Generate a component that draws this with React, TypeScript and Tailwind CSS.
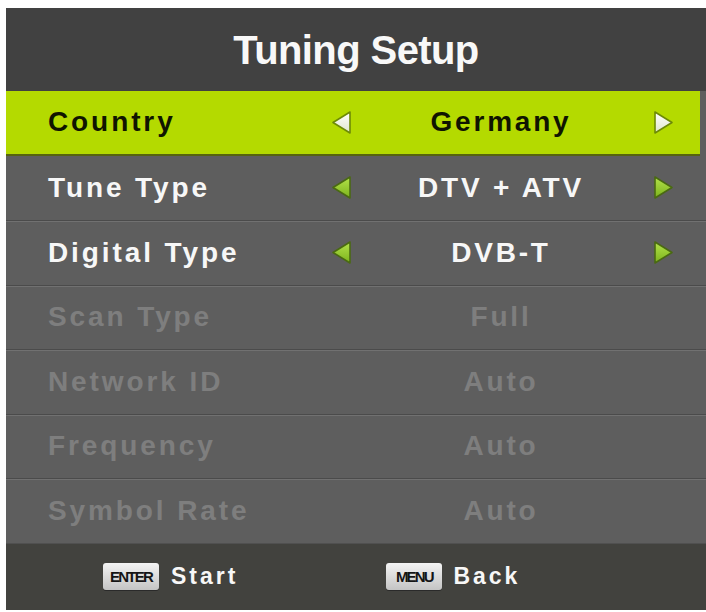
import React from 'react';

type Row = { label: string; value: string; state: 'selected' | 'active' | 'disabled' };

const rows: Row[] = [
  { label: 'Country', value: 'Germany', state: 'selected' },
  { label: 'Tune Type', value: 'DTV + ATV', state: 'active' },
  { label: 'Digital Type', value: 'DVB-T', state: 'active' },
  { label: 'Scan Type', value: 'Full', state: 'disabled' },
  { label: 'Network ID', value: 'Auto', state: 'disabled' },
  { label: 'Frequency', value: 'Auto', state: 'disabled' },
  { label: 'Symbol Rate', value: 'Auto', state: 'disabled' },
];

const Arrow: React.FC<{ dir: 'left' | 'right'; selected: boolean }> = ({ dir, selected }) => {
  const id = `${dir}-${selected ? 's' : 'n'}`;
  const top = selected ? '#ffffff' : '#b3e24a';
  const bottom = selected ? '#dfe6cc' : '#7cb31c';
  const stroke = selected ? '#6d8a06' : '#4a6a12';
  const points = dir === 'left' ? '19,2 19,23 2,12.5' : '3,2 3,23 20,12.5';
  return (
    <svg width="22" height="25" viewBox="0 0 22 25" className="shrink-0">
      <defs>
        <linearGradient id={id} x1="0" y1="0" x2="0" y2="1">
          <stop offset="0" stopColor={top} />
          <stop offset="1" stopColor={bottom} />
        </linearGradient>
      </defs>
      <polygon points={points} fill={`url(#${id})`} stroke={stroke} strokeWidth="1.6" strokeLinejoin="round" />
    </svg>
  );
};

const KeyCap: React.FC<{ label: string }> = ({ label }) => (
  <div className="w-[56px] h-[27px] rounded-[3px] bg-gradient-to-b from-[#f4f4f4] to-[#c4c4c4] flex items-center justify-center shadow-[0_1px_0_#2a2a2a]">
    <span className="text-[15px] font-bold tracking-[-1.8px] text-[#151515] leading-none">{label}</span>
  </div>
);

const MenuRow: React.FC<{ row: Row; first: boolean }> = ({ row, first }) => {
  const selected = row.state === 'selected';
  const disabled = row.state === 'disabled';
  const textColor = selected ? 'text-[#101500]' : disabled ? 'text-[#7e7e7e]' : 'text-[#f7f7f7]';
  return (
    <div
      className={
        'h-[64.5px] flex items-center ' +
        (selected
          ? 'bg-[#b4da00] mr-[6px] border-b-2 border-[#56640f]'
          : first
          ? ''
          : 'border-t border-[#4b4b4b] shadow-[inset_0_1px_0_#717171]')
      }
    >
      <div className={'w-[325px] pl-[42px] text-[28px] font-bold tracking-[2.9px] ' + textColor}>{row.label}</div>
      <div className="w-[22px] flex justify-center">
        {!disabled && <Arrow dir="left" selected={selected} />}
      </div>
      <div className={'w-[293px] pl-[3px] text-center text-[28px] font-bold tracking-[2.8px] ' + textColor}>
        {row.value}
      </div>
      <div className="ml-[6px] w-[22px]">{!disabled && <Arrow dir="right" selected={selected} />}</div>
    </div>
  );
};

const App: React.FC = () => {
  return (
    <div
      className="w-[706px] h-[612px] bg-white pt-[8px] pl-[6px] overflow-hidden"
      style={{ fontFamily: '"Liberation Sans", Arial, sans-serif' }}
    >
      <div className="w-[700px] flex flex-col">
        {/* Header */}
        <div className="h-[83px] bg-[#414141] flex items-center justify-center">
          <h1 className="text-[40px] font-bold tracking-[-0.6px] text-[#f8f8f8] leading-none">Tuning Setup</h1>
        </div>

        {/* Rows */}
        <div className="bg-[#5e5e5e]">
          {rows.map((row, i) => (
            <MenuRow key={row.label} row={row} first={i === 0 || i === 1} />
          ))}
        </div>

        {/* Footer */}
        <div className="h-[67px] bg-[#42423e] border-t border-[#505050] flex items-center pl-[97px]">
          <KeyCap label="ENTER" />
          <span className="ml-[12px] text-[23px] font-bold tracking-[3px] text-[#f7f7f7]">Start</span>
          <div className="ml-[148px]">
            <KeyCap label="MENU" />
          </div>
          <span className="ml-[11px] text-[23px] font-bold tracking-[3px] text-[#f7f7f7]">Back</span>
        </div>
      </div>
    </div>
  );
};

export default App;
